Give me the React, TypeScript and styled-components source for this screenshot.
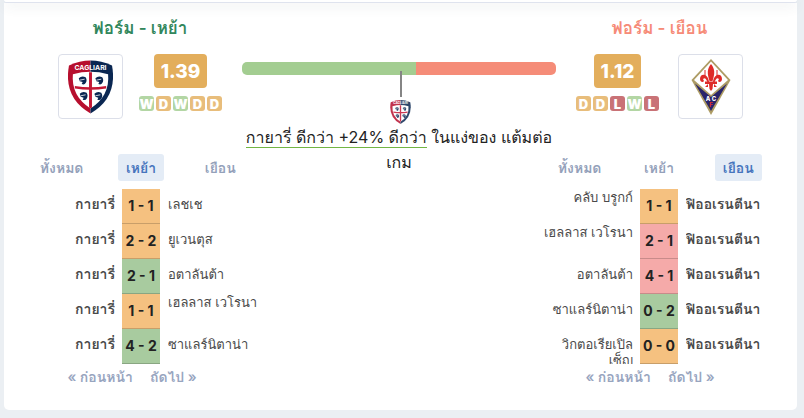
import React from "react";
import styled, { createGlobalStyle, css } from "styled-components";

const GlobalStyle = createGlobalStyle`
  *, *::before, *::after { box-sizing: border-box; }
  body {
    margin: 0;
    background: #ebeff3;
    color: #222;
    font-family: Inter, Tahoma, Loma, "Noto Sans", sans-serif;
  }
  button { font: inherit; border: 0; padding: 0; background: none; cursor: pointer; }
`;

const Page = styled.main`
  padding: 0 7px 8px 4px;
`;

const PreviousCard = styled.div`
  height: 3px;
  background: #fff;
  border-bottom: 1px solid #dfe3ee;
  border-radius: 0 0 4px 4px;
  box-shadow: 0 3px 12px rgba(60, 80, 90, 0.16);
  position: relative;
`;

const Card = styled.section`
  background: #fff;
  border-radius: 0 0 5px 5px;
  padding: 13px 19px 21px 18px;
  display: grid;
  grid-template-columns: 220px 18px 1fr 16px 222px;
  grid-template-rows: 138px auto;
`;

const Header = styled.header<{ $away?: boolean }>`
  grid-row: 1;
  grid-column: ${(p) => (p.$away ? 5 : 1)};
  padding: ${(p) => (p.$away ? "0 35px 0 20px" : "0 20px 0 36px")};
`;

const Title = styled.h2<{ $away?: boolean }>`
  margin: 0 0 14px;
  font-size: 17px;
  line-height: 24px;
  font-weight: 600;
  text-align: center;
  color: ${(p) => (p.$away ? "#f68b78" : "#32875c")};
`;

const Summary = styled.div`
  display: flex;
  justify-content: space-between;
`;

const CrestBox = styled.div`
  width: 65px;
  height: 65px;
  border: 1px solid #dcdfe9;
  border-radius: 4px;
  display: grid;
  place-items: center;
`;

const Points = styled.div`
  display: flex;
  flex-direction: column;
  align-items: center;
  gap: 8px;
`;

const Average = styled.strong`
  background: #e3ae5c;
  color: #fff;
  border-radius: 4px;
  padding: 0 7px;
  font-size: 19px;
  line-height: 36px;
  height: 34px;
  font-weight: 800;
`;

const Badges = styled.div`
  display: flex;
  gap: 2px;
`;

const resultColors = { W: "#b3d6a4", D: "#e8bd7b", L: "#c97276" };

const Badge = styled.span<{ $result: keyof typeof resultColors }>`
  width: 15px;
  height: 15px;
  border-radius: 3px;
  background: ${(p) => resultColors[p.$result]};
  color: #fff;
  font-size: 13px;
  line-height: 16px;
  font-weight: 900;
  display: flex;
  justify-content: center;
`;

const Comparison = styled.div`
  grid-row: 1 / 3;
  grid-column: 2 / 5;
  padding-top: 46px;
  display: flex;
  flex-direction: column;
  align-items: center;
`;

const Bar = styled.div`
  width: 100%;
  height: 13px;
  border-radius: 5px;
  overflow: hidden;
  display: flex;
`;

const BarPart = styled.div<{ $away?: boolean }>`
  flex: ${(p) => (p.$away ? 112 : 139)};
  background: ${(p) => (p.$away ? "#f58c78" : "#a3cd91")};
`;

const Pointer = styled.div`
  width: 2px;
  height: 26px;
  margin: -4px 0 3px 4px;
  background: #858585;
  z-index: 1;
`;

const PointerCrest = styled.div`
  opacity: 0.85;
  padding-left: 3px;
`;

const Verdict = styled.p`
  margin: 1px 0 0;
  font-size: 16px;
  line-height: 25px;
  text-align: center;
`;

const Underlined = styled.span`
  border-bottom: 1px solid #72b543;
`;

const Panel = styled.div<{ $away?: boolean }>`
  grid-row: 2;
  grid-column: ${(p) => (p.$away ? "4 / 6" : "1 / 3")};
`;

const Tabs = styled.div`
  display: grid;
  grid-template-columns: 1fr 1fr 1fr;
  justify-items: center;
  margin-bottom: 8px;
`;

const Tab = styled.button<{ $active?: boolean }>`
  && { padding: 0 8px; }
  height: 27px;
  border-radius: 3px;
  font-size: 14px;
  font-weight: 600;
  color: #94a1ba;
  ${(p) =>
    p.$active &&
    css`
      background: #e4ecf6;
      color: #4775bd;
    `}
`;

const Results = styled.table`
  width: 100%;
  table-layout: fixed;
  border-spacing: 0;
`;

const ScoreColumn = styled.col`
  width: 38px;
`;

const Row = styled.tr`
  height: 35px;
`;

const Team = styled.td<{ $side: "left" | "right"; $bold?: boolean }>`
  padding: ${(p) => (p.$side === "left" ? "0 7px 0 0" : "0 0 0 8px")};
  text-align: ${(p) => (p.$side === "left" ? "right" : "left")};
  vertical-align: top;
  font-size: ${(p) => (p.$bold ? 14 : 13)}px;
  line-height: 16px;
  font-weight: ${(p) => (p.$bold ? 600 : 400)};
  color: #4a4a4a;
`;

const TeamName = styled.div<{ $raised?: boolean }>`
  height: 35px;
  padding-top: ${(p) => (p.$raised ? 0 : 7)}px;
  overflow: ${(p) => (p.$raised ? "visible" : "hidden")};
`;

const scoreColors = { W: "#a8cb9f", D: "#f5c180", L: "#f5aaa9" };

const Score = styled.td<{ $result: keyof typeof scoreColors }>`
  padding: 0;
  background: ${(p) => scoreColors[p.$result]};
  border-bottom: 1px solid rgba(0, 0, 0, 0.18);
  text-align: center;
  font-size: 14px;
  line-height: 20px;
  font-weight: 700;
  white-space: nowrap;
`;

const Pager = styled.nav`
  display: flex;
  justify-content: center;
  gap: 17px;
  padding-right: 18px;
  font-size: 14px;
  line-height: 25px;
  font-weight: 600;
`;

const PagerButton = styled.button`
  color: #98a5bf;
  white-space: nowrap;
`;

const Svg = styled.svg`
  display: block;
`;

const Head = ({ x, y }: { x: number; y: number }) => (
  <g transform={`translate(${x} ${y})`}>
    <path d="M0 2 Q3-1 7 1 Q9 4 7 7 Q6 9 3 8 L4 6 L1 5Z" fill="#0a2752" />
    <path d="M1 4 L6 3" stroke="#fff" strokeWidth=".8" />
  </g>
);

const Cagliari = ({ width, height }: { width: number; height: number }) => (
  <Svg width={width} height={height} viewBox="0 0 46 54" role="img" aria-label="Cagliari">
    <path d="M23 0 Q12 0 1 5 Q-5 38 23 54Z" fill="#b70f2e" />
    <path d="M23 0 Q34 0 45 5 Q51 38 23 54Z" fill="#0a2752" />
    <path d="M5 14 Q23 9 41 14 Q43 36 23 49 Q3 36 5 14Z" fill="#fff" />
    <path d="M21.5 12 H24.5 V48 L23 49 L21.5 48Z M7 26 Q23 28.5 39 26 V28.5 Q23 31 7 28.5Z" fill="#c31734" />
    <Head x={11} y={16} />
    <Head x={28} y={16} />
    <Head x={12} y={32} />
    <Head x={27} y={32} />
    <text x="23" y="10" fill="#fff" fontFamily="Inter" fontSize="7" fontWeight="700" textAnchor="middle">
      CAGLIARI
    </text>
  </Svg>
);

const Fiorentina = () => (
  <Svg width="40" height="56" viewBox="0 0 40 56" role="img" aria-label="Fiorentina">
    <path d="M20 0 L39.5 21 L20 56 L.5 21Z" fill="#ad9c64" />
    <path d="M20 2.5 L37 21 L20 36 L3 21Z" fill="#fff" />
    <path d="M4 24.5 L20 38 L36 24.5 L20 52Z" fill="#29246a" />
    <g fill="#de2b28">
      <path d="M20 5 C16 10 16 14 18.5 22 H21.5 C24 14 24 10 20 5Z" />
      <path d="M18 23 C17 14 9 14 9 20 C9 23 12 24 13 22 L12 20 C15 18 15 21 17 24Z" />
      <path d="M22 23 C23 14 31 14 31 20 C31 23 28 24 27 22 L28 20 C25 18 25 21 23 24Z" />
      <path d="M14 22.5 H26 V25 H14Z M18 25 H22 L21.5 30 L20 32 L18.5 30Z" />
      <path d="M17 25 L14 28 L17 28Z M23 25 L26 28 L23 28Z" />
      <path d="M14 17 V11 M26 17 V11" stroke="#de2b28" strokeWidth="1" />
    </g>
    <g fontFamily="Inter" fontSize="6" fontWeight="800" textAnchor="middle">
      <text x="17" y="42" fill="#fff">A</text>
      <text x="23" y="42" fill="#fff">C</text>
      <text x="20" y="48" fill="#de2b28">F</text>
    </g>
  </Svg>
);

type Result = "W" | "D" | "L";
type Match = { home: string; score: string; away: string; result: Result; raised?: boolean };

const homeMatches: Match[] = [
  { home: "กายารี่", score: "1 - 1", away: "เลชเช", result: "D" },
  { home: "กายารี่", score: "2 - 2", away: "ยูเวนตุส", result: "D" },
  { home: "กายารี่", score: "2 - 1", away: "อตาลันต้า", result: "W" },
  { home: "กายารี่", score: "1 - 1", away: "เฮลลาส เวโรนา", result: "D", raised: true },
  { home: "กายารี่", score: "4 - 2", away: "ซาแลร์นิตาน่า", result: "W" },
];

const awayMatches: Match[] = [
  { home: "คลับ บรูกก์", score: "1 - 1", away: "ฟิออเรนตีนา", result: "D", raised: true },
  { home: "เฮลลาส เวโรนา", score: "2 - 1", away: "ฟิออเรนตีนา", result: "L", raised: true },
  { home: "อตาลันต้า", score: "4 - 1", away: "ฟิออเรนตีนา", result: "L" },
  { home: "ซาแลร์นิตาน่า", score: "0 - 2", away: "ฟิออเรนตีนา", result: "W" },
  { home: "วิกตอเรียเปิล เซ็ญ", score: "0 - 0", away: "ฟิออเรนตีนา", result: "D" },
];

const Form = ({ average, results }: { average: string; results: Result[] }) => (
  <Points>
    <Average>{average}</Average>
    <Badges>
      {results.map((r, i) => (
        <Badge key={i} $result={r}>{r}</Badge>
      ))}
    </Badges>
  </Points>
);

const tabs = ["ทั้งหมด", "เหย้า", "เยือน"];

const MatchPanel = ({ matches, away }: { matches: Match[]; away?: boolean }) => (
  <Panel $away={away}>
    <Tabs>
      {tabs.map((t, i) => (
        <Tab key={t} $active={i === (away ? 2 : 1)}>{t}</Tab>
      ))}
    </Tabs>
    <Results>
      <colgroup>
        <col />
        <ScoreColumn />
        <col />
      </colgroup>
      <tbody>
        {matches.map((m, i) => (
          <Row key={i}>
            <Team $side="left" $bold={!away}>
              <TeamName $raised={away && m.raised}>{m.home}</TeamName>
            </Team>
            <Score $result={m.result}>{m.score}</Score>
            <Team $side="right" $bold={away}>
              <TeamName $raised={!away && m.raised}>{m.away}</TeamName>
            </Team>
          </Row>
        ))}
      </tbody>
    </Results>
    <Pager>
      <PagerButton>« ก่อนหน้า</PagerButton>
      <PagerButton>ถัดไป »</PagerButton>
    </Pager>
  </Panel>
);

export default function App() {
  return (
    <>
      <GlobalStyle />
      <Page>
        <PreviousCard />
        <Card>
          <Header>
            <Title>ฟอร์ม - เหย้า</Title>
            <Summary>
              <CrestBox><Cagliari width={45} height={54} /></CrestBox>
              <Form average="1.39" results={["W", "D", "W", "D", "D"]} />
            </Summary>
          </Header>
          <Comparison>
            <Bar>
              <BarPart />
              <BarPart $away />
            </Bar>
            <Pointer />
            <PointerCrest><Cagliari width={21} height={24} /></PointerCrest>
            <Verdict>
              <Underlined>กายารี่ ดีกว่า +24% ดีกว่า</Underlined> ในแง่ของ แต้มต่อ
              <br />
              เกม
            </Verdict>
          </Comparison>
          <Header $away>
            <Title $away>ฟอร์ม - เยือน</Title>
            <Summary>
              <Form average="1.12" results={["D", "D", "L", "W", "L"]} />
              <CrestBox><Fiorentina /></CrestBox>
            </Summary>
          </Header>
          <MatchPanel matches={homeMatches} />
          <MatchPanel matches={awayMatches} away />
        </Card>
      </Page>
    </>
  );
}
